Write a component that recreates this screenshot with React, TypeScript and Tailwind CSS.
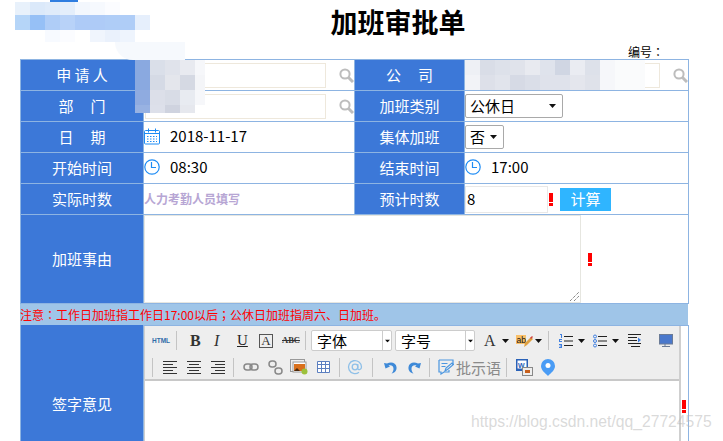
import type { ReactNode } from 'react';

const cjk = "font-['Noto_Sans_CJK_SC','Liberation_Sans',sans-serif]";

const Label = ({ children, tall }: { children: ReactNode; tall?: boolean }) => (
  <div
    className={`flex items-center justify-center bg-[#3c78d8] text-[15px] text-white border-r border-b border-[#8db4e2] whitespace-pre ${
      tall ? 'h-full' : 'h-[31px]'
    }`}
  >
    {children}
  </div>
);

const Cell = ({ children, className = '' }: { children?: ReactNode; className?: string }) => (
  <div className={`relative flex items-center h-[31px] border-r border-b border-[#8db4e2] bg-white ${className}`}>
    {children}
  </div>
);

const Caret = ({ className = '' }: { className?: string }) => (
  <svg width="7" height="4" viewBox="0 0 7 4" className={className}>
    <path d="M0 0h7L3.5 4z" fill="#111" />
  </svg>
);

const Bang = ({ className = '' }: { className?: string }) => (
  <div className={`flex flex-col gap-[1px] w-[4px] ${className}`}>
    <div className="h-[9px] bg-[#ff0000]" />
    <div className="h-[3px] bg-[#ff0000]" />
  </div>
);

// the centred full-width colon of the reference
const Colon = ({ char = '：' }: { char?: string }) => (
  <span className="font-['Noto_Sans_CJK_TC',sans-serif]">{char}</span>
);

const SearchIcon = ({ className = '' }: { className?: string }) => (
  <svg width="15" height="15" viewBox="0 0 15 15" fill="none" stroke="#bdbdbd" className={className}>
    <circle cx="6" cy="6" r="4.6" strokeWidth="2" />
    <path d="M9.500 9.500L14 14" strokeWidth="3" />
  </svg>
);

const CalendarIcon = () => (
  <svg width="16" height="17" viewBox="0 0 16 17" fill="none" stroke="#1e8cf5" strokeWidth="1">
    <rect x="0.5" y="2.5" width="15" height="13.5" rx="1" />
    <path d="M4.5 0.5v4M11.5 0.5v4M1 5.5h14" />
    <path d="M3 8.5h10M3 11h10M3 13.5h10" strokeDasharray="1.5 1.5" />
  </svg>
);

const ClockIcon = () => (
  <svg width="16" height="16" viewBox="0 0 16 16" fill="none" stroke="#1e8cf5" strokeWidth="1.2">
    <circle cx="8" cy="8" r="7.2" />
    <path d="M7.5 3v5.5H12" />
  </svg>
);

const Sep = ({ className = '' }: { className?: string }) => <div className={`w-px h-[19px] bg-[#c4c4c4] ${className}`} />;

const Lines = ({ kind }: { kind: 'left' | 'center' | 'right' }) => {
  const d = {
    left: 'M0 .5h14M0 3.5h10M0 6.5h14M0 9.5h10M0 12.5h14',
    center: 'M0 .5h14M2 3.5h10M0 6.5h14M2 9.5h10M0 12.5h14',
    right: 'M0 .5h14M4 3.5h10M0 6.5h14M4 9.5h10M0 12.5h14',
  }[kind];
  return (
    <svg width="14" height="13" viewBox="0 0 14 13" stroke="#333" fill="none">
      <path d={d} />
    </svg>
  );
};

const ToolSelect = ({ text, width }: { text: string; width: string }) => (
  <div className={`flex items-center h-[21px] bg-white border border-[#ccc] rounded-[2px] ${width}`}>
    <span className="flex-1 pl-[5px] text-[15px] leading-none text-black">{text}</span>
    <div className="flex items-center justify-center w-[9px] h-full border-l border-[#ccc]">
      <Caret className="scale-75" />
    </div>
  </div>
);

const Toolbar = () => (
  <div className="h-[55px] bg-[#eeeeee] border-b-2 border-[#c8c8c8]">
    <div className="flex items-center h-[29px]">
      <span className="ml-[7px] w-[17px] whitespace-nowrap text-[6.5px] font-bold text-[#2f6ca8] font-['Liberation_Sans',sans-serif]">HTML</span>
      <Sep className="ml-[7px]" />
      <span className="ml-[13px] w-[10px] text-[16px] font-bold leading-none text-[#333] font-['Liberation_Serif',serif]">B</span>
      <span className="ml-[14px] w-[8px] text-[16px] italic leading-none text-[#333] font-['Liberation_Serif',serif]">I</span>
      <span className="ml-[15px] w-[10px] text-[15px] underline leading-none text-[#222] font-['Liberation_Serif',serif]">U</span>
      <span className="ml-[12px] flex items-center justify-center w-[14px] h-[14px] border border-[#555] text-[13px] leading-none text-[#333] font-['Liberation_Serif',serif]">A</span>
      <span className="ml-[9px] w-[16px] whitespace-nowrap text-[8.5px] font-bold line-through leading-none text-[#333] font-['Liberation_Serif',serif]">ABC</span>
      <Sep className="ml-[7px]" />
      <div className="ml-[5px]"><ToolSelect text="字体" width="w-[81px]" /></div>
      <div className="ml-[3px]"><ToolSelect text="字号" width="w-[80px]" /></div>
      <span className="ml-[9px] w-[11px] text-[16px] leading-none text-[#333] font-['Liberation_Serif',serif]">A</span>
      <Caret className="ml-[7px]" />
      <svg width="17" height="14" viewBox="0 0 17 14" className="ml-[7px]">
        <rect x="0" y="1" width="10" height="9" fill="#f9c06a" />
        <text x="0.5" y="8.5" fontSize="8.500" fill="#111" fontFamily="Liberation Sans">ab</text>
        <path d="M8 13l1-4 6-6 2 2-6 6z" fill="#e0a040" />
        <path d="M14 4l2-2 1 1-2 2z" fill="#d04040" />
      </svg>
      <Caret className="ml-[2px]" />
      <Sep className="ml-[6px]" />
      <svg width="15" height="14" viewBox="0 0 15 14" className="ml-[10px]" fill="#3f7fe0">
        <path d="M1 0h2v4H2V1H1zM0 5h3v1H1v1h2v1H0zM0 10h3v4H0v-1h2v-.5H.500v-1H2V11H0z" />
        <path d="M5 2.500h9M5 7h9M5 11.500h9" stroke="#222" fill="none" />
      </svg>
      <Caret className="ml-[4px]" />
      <svg width="14" height="14" viewBox="0 0 14 14" className="ml-[8px]">
        <circle cx="2" cy="2.500" r="1.500" fill="none" stroke="#3f7fe0" />
        <circle cx="2" cy="7" r="1.500" fill="none" stroke="#3f7fe0" />
        <circle cx="2" cy="11.500" r="1.500" fill="none" stroke="#3f7fe0" />
        <path d="M5 2.500h9M5 7h9M5 11.500h9" stroke="#222" fill="none" />
      </svg>
      <Caret className="ml-[5px]" />
      <svg width="13" height="13" viewBox="0 0 13 13" className="ml-[9px]">
        <path d="M0 .5h13M0 3.500h9M0 6.500h9M0 9.500h13M3 12.500h9" stroke="#222" fill="none" />
        <path d="M10 3.500v5l3-2.500z" fill="#3f7fe0" />
      </svg>
      <svg width="14" height="14" viewBox="0 0 14 14" className="ml-[18px]">
        <rect x="0.500" y="0.500" width="13" height="9.500" fill="#4a78cc" stroke="#6b7b96" />
        <path d="M6 10v2M3 12.500h8" stroke="#6b7b96" fill="none" />
      </svg>
    </div>
    <div className="flex items-center h-[24px]">
      <Sep className="ml-[7px]" />
      <div className="ml-[10px]"><Lines kind="left" /></div>
      <div className="ml-[10px]"><Lines kind="center" /></div>
      <div className="ml-[10px]"><Lines kind="right" /></div>
      <Sep className="ml-[8px]" />
      <svg width="16" height="8" viewBox="0 0 16 8" className="ml-[9px]" fill="none" stroke="#888" strokeWidth="1.500">
        <rect x="1" y="1" width="8" height="6" rx="3" />
        <rect x="7" y="1" width="8" height="6" rx="3" />
      </svg>
      <svg width="15" height="15" viewBox="0 0 15 15" className="ml-[9px]" fill="none" stroke="#888" strokeWidth="1.500">
        <rect x="1" y="1" width="7" height="6" rx="3" />
        <rect x="7" y="8" width="7" height="6" rx="3" />
      </svg>
      <svg width="18" height="16" viewBox="0 0 18 16" className="ml-[7px]">
        <rect x="0.500" y="0.500" width="14" height="12" fill="#eee" stroke="#999" />
        <rect x="3" y="3" width="13" height="10" fill="#fff" stroke="#999" />
        <rect x="4" y="5" width="11" height="7" fill="#d9701c" />
        <path d="M4 12l3-3 3 3z" fill="#4a2a10" />
        <circle cx="14.500" cy="12.500" r="3" fill="#9cc13c" />
      </svg>
      <svg width="13" height="12" viewBox="0 0 13 12" className="ml-[9px]" fill="#fff" stroke="#5b7fc0">
        <path d="M.5.500h12v11H.5zM.5 3.500h12M.5 7.500h12M4.500 .5v11M8.500 .5v11" />
      </svg>
      <Sep className="ml-[9px]" />
      <svg width="16" height="16" viewBox="0 0 16 16" className="ml-[7px]" fill="none" stroke="#8fc0e8" strokeWidth="1.300">
        <circle cx="8" cy="8" r="2.800" />
        <path d="M10.800 5v4.500c0 2 3.700 1.500 3.700-1.500A6.500 6.500 0 1 0 12 13.200" />
      </svg>
      <Sep className="ml-[9px]" />
      <svg width="13" height="13" viewBox="0 0 13 13" className="ml-[11px]" fill="#3f8ad8">
        <path d="M0 2l1.500 5.500L6 5.500 4.500 4.500C7 3.500 10 5 9.500 8.500 9.300 10 8.500 11.500 7.500 12.500 10.500 12 13 9.500 12.500 6 12 2 7.500.5 3 2.500z" />
      </svg>
      <svg width="13" height="13" viewBox="0 0 13 13" className="ml-[11px] -scale-x-100" fill="#3f8ad8">
        <path d="M0 2l1.500 5.500L6 5.500 4.500 4.500C7 3.500 10 5 9.500 8.500 9.300 10 8.500 11.500 7.500 12.500 10.500 12 13 9.500 12.500 6 12 2 7.500.5 3 2.500z" />
      </svg>
      <Sep className="ml-[8px]" />
      <svg width="16" height="16" viewBox="0 0 16 16" className="ml-[8px]" fill="none" stroke="#4a96e0" strokeWidth="1.200">
        <path d="M1 1h14v5M11 11v2H6l-3 2v-2H1V1" />
        <path d="M3.500 4.500h6M3.500 7.500h4M7 12l1-3 6-5 1.500 1.500-6 5z" />
      </svg>
      <span className="ml-[2px] w-[45px] text-[15px] leading-none text-[#8a8a8a]">批示语</span>
      <Sep className="ml-[5px]" />
      <svg width="17" height="17" viewBox="0 0 17 17" className="ml-[9px]">
        <rect x="0" y="0" width="12" height="12" fill="#2a62b8" />
        <rect x="1.500" y="1.500" width="9" height="8" fill="#fff" />
        <text x="2" y="8.500" fontSize="7" fontWeight="700" fill="#2a62b8" fontFamily="Liberation Sans">W</text>
        <rect x="6.500" y="8.500" width="10" height="8" fill="#eee" stroke="#888" />
        <rect x="9" y="11" width="5" height="3" fill="#c8601c" />
      </svg>
      <svg width="14" height="17" viewBox="0 0 14 17" className="ml-[8px]">
        <path d="M7 0a7 7 0 0 1 7 7c0 4-4 7-7 10C4 14 0 11 0 7a7 7 0 0 1 7-7z" fill="#4a9cf5" />
        <circle cx="7" cy="6.500" r="2.500" fill="#fff" />
      </svg>
    </div>
  </div>
);

type PatchProps = { x: string; cols: string; rows: string[][]; rowH: string };

const Patch = ({ x, cols, rows, rowH }: PatchProps) => (
  <div className={`absolute grid ${x} ${cols} ${rowH}`}>
    {rows.flat().map((c, i) => (
      <div key={i} style={{ backgroundColor: c }} />
    ))}
  </div>
);

const none = 'transparent';

export default function App() {
  return (
    <div className={`relative h-[441px] w-[723px] overflow-hidden bg-white text-black ${cjk}`}>
      <div className="flex h-[43px] items-center justify-center pl-[73px] text-[27px] font-bold leading-none">加班审批单</div>
      <div className="flex h-[16px] items-center justify-end pr-[59px] pt-[2px] text-[12px] leading-none">
        编号<Colon />
      </div>

      <div className="ml-[20px] w-[669px] border-t border-l border-[#8db4e2]">
        <div className="grid grid-cols-[123px_211px_110px_224px]">
          <Label>申 请 人</Label>
          <Cell>
            <div className="ml-[1px] h-[25px] w-[181px] border border-[#eee8dc]" />
            <SearchIcon className="ml-[13px]" />
          </Cell>
          <Label>公{'     '}司</Label>
          <Cell>
            <div className="h-[25px] w-[195px] border border-[#eee8dc]" />
            <SearchIcon className="ml-[13px]" />
          </Cell>

          <Label>部{'     '}门</Label>
          <Cell>
            <div className="ml-[1px] h-[25px] w-[181px] border border-[#eee8dc]" />
            <SearchIcon className="ml-[13px]" />
          </Cell>
          <Label>加班类别</Label>
          <Cell>
            <div className="flex h-[24px] w-[98px] items-center justify-between rounded-[2px] border border-[#a9a9a9] pl-[4px] pr-[6px] text-[15px]">
              公休日
              <Caret />
            </div>
          </Cell>

          <Label>日{'     '}期</Label>
          <Cell className="pb-[2px]">
            <CalendarIcon />
            <span className="ml-[10px] text-[15px]">2018-11-17</span>
          </Cell>
          <Label>集体加班</Label>
          <Cell>
            <div className="flex h-[24px] w-[39px] items-center justify-between rounded-[2px] border border-[#a9a9a9] pl-[4px] pr-[6px] text-[15px]">
              否
              <Caret />
            </div>
          </Cell>

          <Label>开始时间</Label>
          <Cell className="pb-[2px]">
            <ClockIcon />
            <span className="ml-[10px] text-[15px]">08:30</span>
          </Cell>
          <Label>结束时间</Label>
          <Cell className="pb-[2px]">
            <ClockIcon />
            <span className="ml-[10px] text-[15px]">17:00</span>
          </Cell>

          <Label>实际时数</Label>
          <Cell>
            <span className="text-[12px] font-bold text-[#b7a6d4]">人力考勤人员填写</span>
          </Cell>
          <Label>预计时数</Label>
          <Cell>
            <div className="flex h-[27px] w-[83px] items-center border border-[#e8e8e8] pl-[1px] text-[15px]">8</div>
            <Bang className="ml-[1px]" />
            <div className="ml-[7px] flex h-[23px] w-[51px] items-center justify-center bg-[#2fb5ff] text-[15px] text-white">计算</div>
          </Cell>
        </div>

        <div className="grid h-[89px] grid-cols-[123px_545px]">
          <Label tall>加班事由</Label>
          <div className="flex items-center border-r border-b border-[#8db4e2] bg-white">
            <div className="relative h-full w-[437px] border border-[#e6e6e0]">
              <svg width="9" height="9" viewBox="0 0 9 9" className="absolute right-[1px] bottom-[1px]" stroke="#555" strokeDasharray="1 1">
                <path d="M0 9L9 0M4 9l5-5" />
              </svg>
            </div>
            <Bang className="ml-[7px]" />
          </div>
        </div>
      </div>

      <div className="ml-[20px] flex h-[21px] w-[668px] items-center bg-[#9fc5e8] text-[12px] leading-none text-[#ff0000]">
        <span>
          注意<Colon />工作日加班指工作日17:00以后<Colon char="；" />公休日加班指周六、日加班。
        </span>
      </div>

      <div className="ml-[20px] grid h-[160px] w-[669px] grid-cols-[123px_545px] border-l border-[#8db4e2]">
        <Label tall>签字意见</Label>
        <div className="flex border-t border-r border-[#8db4e2] bg-white">
          <div className="w-[537px] border-l border-r-2 border-[#cfcfcf] bg-white">
            <Toolbar />
          </div>
          <Bang className="ml-[1px] mt-[74px]" />
        </div>
      </div>

      {/* blurred-out names */}
      <div className="absolute left-[50px] top-0 h-[2px] w-[28px] bg-[#2f7de0]" />
      <Patch
        x="top-[2px] left-[15px]"
        cols="grid-cols-[repeat(9,15px)]"
        rowH="grid-rows-[13px_15px_12px]"
        rows={[
          ['#e8f1fb', '#dbe9fa', '#dfebfa', '#e4eefb', '#f3f7fd', '#f6f9fe', '#fbfcff', none, none],
          ['#b5d5f8', '#96c0f6', '#afcdf7', '#b8d2f8', '#aecbf7', '#aecbf7', '#afcdf7', '#afcdf7', '#e6effc'],
          [none, none, '#f7faff', '#fbfcff', none, '#f0f5fd', '#eaf1fc', '#eef4fd', none],
        ]}
      />
      <div className="absolute left-[115px] top-[42px] h-[18px] w-[70px] rounded-bl-[18px] bg-[#f6f9fd]" />
      <Patch
        x="top-[60px] left-[135px]"
        cols="grid-cols-[repeat(4,15px)_10px]"
        rowH="grid-rows-[15px_15px_15px_8px]"
        rows={[
          ['#8aa9e0', '#dadfe9', '#e0e3eb', '#e8eaf0', '#f6f7fa'],
          ['#8aa9e0', '#d5dae5', '#e4e6ec', '#d5d9e3', '#f4f5f8'],
          ['#8fabe0', '#dcdfe9', '#d8dce6', '#e8ebf1', '#f6f7fa'],
          ['#98b2e2', '#dde0ea', '#cfd3df', '#e6e8ee', none],
        ]}
      />
      <Patch
        x="top-[60px] left-[465px]"
        cols="grid-cols-[repeat(10,15px)_30px]"
        rowH="grid-rows-[15px_15px]"
        rows={[
          ['#eef0f5', '#d9dde7', '#dde1ea', '#e0e3eb', '#e8eaf0', '#dfe3ec', '#d0d6e3', '#eaecf2', '#dde1ea', '#f6f7fa', '#fafbfc'],
          ['#f2f3f7', '#dde0e9', '#e1e4ec', '#d6dae5', '#dadee8', '#dfe2eb', '#dfe2eb', '#e4e6ed', '#dfe2ea', '#f6f7fa', '#fafbfc'],
        ]}
      />

      <div className="absolute left-[471px] top-[414px] whitespace-nowrap text-[15.7px] leading-none text-[#b5b5b5]/50 font-['Liberation_Sans',sans-serif]">
        https://blog.csdn.net/qq_27724575
      </div>
    </div>
  );
}
